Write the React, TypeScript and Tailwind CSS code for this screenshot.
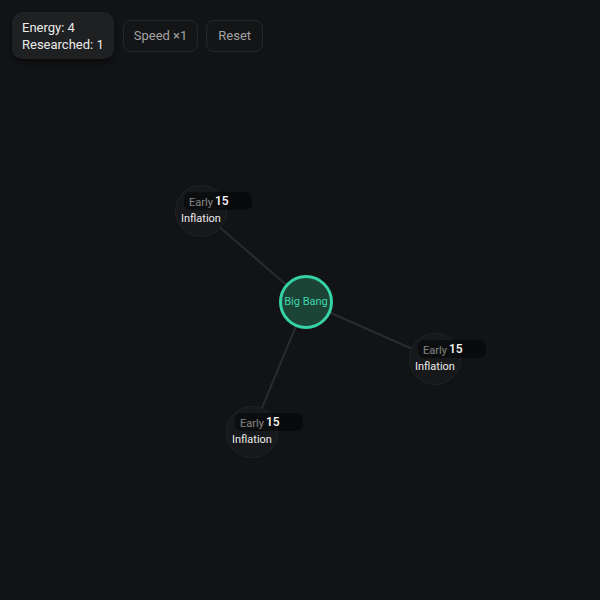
import React from "react";

type TechNode = { id: string; x: number; y: number; cost: number };

const root = { x: 306, y: 302 };

const nodes: TechNode[] = [
  { id: "a", x: 201, y: 211, cost: 15 },
  { id: "b", x: 435, y: 359, cost: 15 },
  { id: "c", x: 252, y: 432, cost: 15 },
];

function LockedNode({ node }: { node: TechNode }) {
  return (
    <div
      className="absolute h-[52px] w-[52px]"
      style={{ left: node.x - 26, top: node.y - 26 }}
    >
      <div className="flex h-full w-full items-center justify-center rounded-full border border-[#222326] bg-[#17181a]">
        <div className="text-center text-[11px] leading-[16px] text-[#ececec]">
          Early
          <br />
          Inflation
        </div>
      </div>
      <div className="absolute left-[9px] top-[7px] h-[18px] w-[68px] rounded-md bg-black/45 pl-[31px] text-[12px] font-medium leading-[18px] text-white">
        {node.cost}
      </div>
    </div>
  );
}

export default function App() {
  return (
    <div
      className="relative h-[600px] w-[600px] overflow-hidden bg-[#121315]"
      style={{ fontFamily: "Roboto, 'Liberation Sans', sans-serif" }}
    >
      <svg className="absolute inset-0" width={600} height={600}>
        {nodes.map((n) => (
          <line
            key={n.id}
            x1={root.x}
            y1={root.y}
            x2={n.x}
            y2={n.y}
            stroke="#2a2b2e"
            strokeWidth={2}
          />
        ))}
      </svg>

      {nodes.map((n) => (
        <LockedNode key={n.id} node={n} />
      ))}

      <div
        className="absolute flex h-[54px] w-[54px] items-center justify-center rounded-full border-[3px] border-[#36d3a7] bg-[#1b4336] text-[11px] text-[#3fd6ad]"
        style={{ left: root.x - 27, top: root.y - 27 }}
      >
        Big Bang
      </div>

      <div className="absolute left-3 top-3 flex items-center gap-2">
        <div className="rounded-[10px] bg-[#1f2022] px-[10px] pb-[6px] pt-[7px] text-[13px] leading-[17px] text-[#ececec] shadow-md shadow-black/40">
          <div>Energy: 4</div>
          <div>Researched: 1</div>
        </div>
        <button className="ml-px h-[32px] rounded-lg border border-[#26272a] bg-[#141517] px-[10px] text-[13px] text-[#a3a3a3]">
          Speed ×1
        </button>
        <button className="h-[32px] rounded-lg border border-[#26272a] bg-[#141517] px-[11px] text-[13px] text-[#a3a3a3]">
          Reset
        </button>
      </div>
    </div>
  );
}
